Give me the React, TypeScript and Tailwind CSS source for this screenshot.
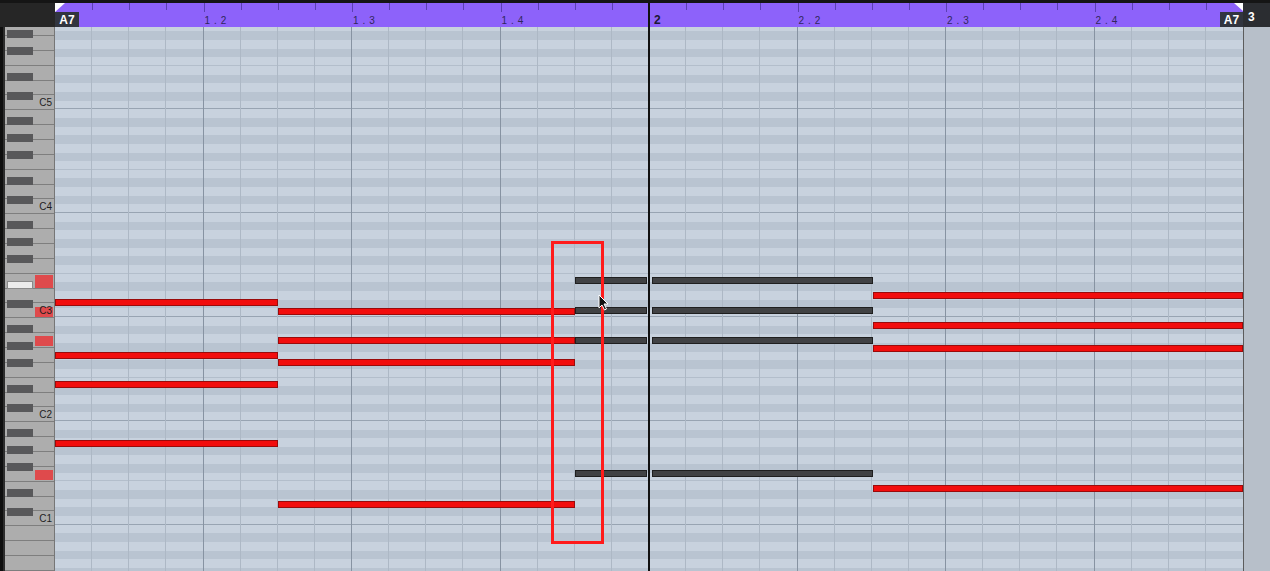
import React from "react"

const OCT = 104
const WHITE = OCT / 7
const BEAT = 148.5
const SIX = BEAT / 4
// C5 bottom edge, measured from the top of the note area
const C5_LINE = 82.33

const BLACK_OFFSETS = [8, 24.7, 41.3, 68, 87]

type Note = { x1: number; x2: number; y: number; gray?: boolean }

// page coordinates taken from the screenshot
const notes: Note[] = [
  { x1: 55, x2: 278, y: 298.5 },
  { x1: 55, x2: 278, y: 351.5 },
  { x1: 55, x2: 278, y: 381 },
  { x1: 55, x2: 278, y: 440 },
  { x1: 278, x2: 575, y: 307.5 },
  { x1: 278, x2: 575, y: 337 },
  { x1: 278, x2: 575, y: 359 },
  { x1: 278, x2: 575, y: 501 },
  { x1: 873, x2: 1243, y: 292 },
  { x1: 873, x2: 1243, y: 322 },
  { x1: 873, x2: 1243, y: 344.5 },
  { x1: 873, x2: 1243, y: 485 },
  { x1: 575, x2: 647, y: 277, gray: true },
  { x1: 652, x2: 873, y: 277, gray: true },
  { x1: 575, x2: 647, y: 307, gray: true },
  { x1: 652, x2: 873, y: 307, gray: true },
  { x1: 575, x2: 647, y: 337, gray: true },
  { x1: 652, x2: 873, y: 337, gray: true },
  { x1: 575, x2: 647, y: 470, gray: true },
  { x1: 652, x2: 873, y: 470, gray: true },
]

const pressed = [
  { top: 248, h: 13 },
  { top: 279.7, h: 10.6 },
  { top: 308.7, h: 10.3 },
  { top: 443, h: 10.3 },
]

const isBlack = (pc: number) => [1, 3, 6, 8, 10].includes(pc)

function Ruler() {
  const labels = [
    { beat: 1, text: "1 . 2" },
    { beat: 2, text: "1 . 3" },
    { beat: 3, text: "1 . 4" },
    { beat: 5, text: "2 . 2" },
    { beat: 6, text: "2 . 3" },
    { beat: 7, text: "2 . 4" },
  ]
  return (
    <div className="relative w-[1188px] bg-[#8d62fa]">
      {/* Ticks */}
      {Array.from({ length: 31 }, (_, j) => {
        const beat = (j + 1) % 4 === 0
        return (
          <div
            key={j}
            className={`absolute top-0 w-px bg-[#5b3fb4] ${beat ? "h-[9px]" : "h-[7px]"}`}
            style={{ left: (j + 1) * SIX }}
          />
        )
      })}
      {labels.map((l) => (
        <span
          key={l.text}
          className="absolute top-[12px] text-[10px] leading-[11px] text-[#30265c] tracking-[0.6px]"
          style={{ left: l.beat * BEAT + 1 }}
        >
          {l.text}
        </span>
      ))}
      <span className="absolute left-[599px] top-[11px] text-[12px] leading-[13px] font-bold text-[#1c1833]">2</span>
      <div className="absolute left-[593px] top-0 bottom-0 w-[2px] bg-[#111]" />

      {/* Loop start / end */}
      <svg className="absolute left-0 top-0" width="10" height="9" viewBox="0 0 10 9">
        <polygon points="0,0 10,0 0,9" fill="#fff" />
      </svg>
      <div className="absolute left-0 bottom-0 h-[15px] w-[24px] bg-[#31353f] flex items-center justify-center">
        <span className="text-[12px] leading-[12px] font-bold text-white">A7</span>
      </div>
      <svg className="absolute right-0 top-0" width="9" height="8" viewBox="0 0 9 8">
        <polygon points="0,0 9,0 9,8" fill="#fff" />
      </svg>
      <div className="absolute right-0 bottom-0 h-[15px] w-[23px] bg-[#31353f] flex items-center justify-center">
        <span className="text-[12px] leading-[12px] font-bold text-white">A7</span>
      </div>
    </div>
  )
}

function Keyboard() {
  const whiteLines = Array.from({ length: 44 }, (_, k) => C5_LINE + (k - 6) * WHITE).filter((y) => y > -2 && y < 546)
  const blacks: number[] = []
  for (let o = -1; o < 5; o++) {
    for (const b of BLACK_OFFSETS) {
      const y = C5_LINE + o * OCT + b - OCT
      if (y > -10 && y < 546) blacks.push(y)
    }
  }
  return (
    <div className="relative w-[50px] bg-[#adadad] border-r border-[#767676] overflow-hidden">
      {whiteLines.map((y) => (
        <div key={y} className="absolute left-0 right-0 h-px bg-[#7e7e7e]" style={{ top: y }} />
      ))}
      {pressed.map((p) => (
        <div key={p.top} className="absolute left-[30px] w-[18px] bg-[#df4a4c]" style={{ top: p.top, height: p.h }} />
      ))}
      {blacks.map((y) => {
        const selected = Math.abs(y - 255.3) < 3
        return (
          <div
            key={y}
            className={`absolute left-[2px] w-[26px] h-[8px] ${selected ? "bg-[#ececec] border border-[#8a8a8a]" : "bg-[#58585a]"}`}
            style={{ top: y }}
          />
        )
      })}
      {[5, 4, 3, 2, 1].map((n, i) => (
        <span
          key={n}
          className="absolute right-[2px] text-[10px] leading-[11px] text-[#1e1e1e]"
          style={{ top: C5_LINE + i * OCT - 12.3 }}
        >
          C{n}
        </span>
      ))}
    </div>
  )
}

function Grid() {
  const rows = Array.from({ length: 64 }, (_, i) => ((9 - i) % 12 + 12) % 12)
  return (
    <div className="relative w-[1188px] overflow-hidden bg-[#c8d2de]">
      {/* Pitch rows */}
      <div className="absolute left-0 right-0 top-[-4.33px] flex flex-col">
        {rows.map((pc, i) => (
          <div
            key={i}
            className={`h-[8.667px] shrink-0 ${isBlack(pc) ? "bg-[#b9c4d1]" : "bg-[#c8d2de]"} ${
              pc === 0 ? "border-b border-[#98a4b2]" : pc === 5 ? "border-b border-[#b3becb]" : ""
            }`}
          />
        ))}
      </div>

      {/* Time columns */}
      <div className="absolute inset-0 flex">
        {Array.from({ length: 32 }, (_, j) => (
          <div
            key={j}
            className={`w-[37.125px] shrink-0 h-full ${
              j === 31 ? "" : (j + 1) % 4 === 0 ? "border-r border-[#8793a2]" : "border-r border-[#adb8c5]"
            }`}
          />
        ))}
      </div>

      {/* Notes */}
      {notes.map((n, i) => (
        <div
          key={i}
          className={`absolute h-[7px] border ${
            n.gray ? "bg-[#414244] border-[#1f1f1f]" : "bg-[#f20d0d] border-[#9a0b0b]"
          }`}
          style={{ left: n.x1 - 55, width: n.x2 - n.x1, top: n.y - 27 }}
        />
      ))}

      {/* Bar 2 line */}
      <div className="absolute left-[593px] top-0 bottom-0 w-[2px] bg-[#111]" />

      {/* Time selection */}
      <div className="absolute left-[496px] top-[214px] w-[53px] h-[303px] border-[3px] border-[#ff1b1b]" />

      {/* Mouse pointer */}
      <svg className="absolute left-[543px] top-[267px]" width="10" height="17" viewBox="0 0 10 17">
        <path d="M1 1 L1 14 L4 11 L6.5 16 L8.5 15 L6 10 L10 10 Z" fill="#111" stroke="#fff" strokeWidth="1" />
      </svg>
    </div>
  )
}

export default function App() {
  return (
    <div className="w-[1270px] h-[571px] overflow-hidden bg-[#1c1c1c] flex flex-col font-['Liberation_Sans',Arial,sans-serif]">
      <div className="h-[3px] shrink-0 bg-[#151515]" />
      <div className="h-[24px] shrink-0 flex">
        <div className="w-[55px] bg-[#262626]" />
        <Ruler />
        <div className="w-[27px] bg-[#2b2d31] flex items-center pl-[5px] pt-[4px]">
          <span className="text-white text-[12px] leading-[12px] font-bold">3</span>
        </div>
      </div>
      <div className="flex-1 flex min-h-0">
        <div className="w-[5px] bg-[#2c2c2c] border-l-[3px] border-[#0e0e0e]" />
        <Keyboard />
        <Grid />
        <div className="w-[27px] bg-[#b7bfc9] border-l border-[#5c5c5c]" />
      </div>
    </div>
  )
}
